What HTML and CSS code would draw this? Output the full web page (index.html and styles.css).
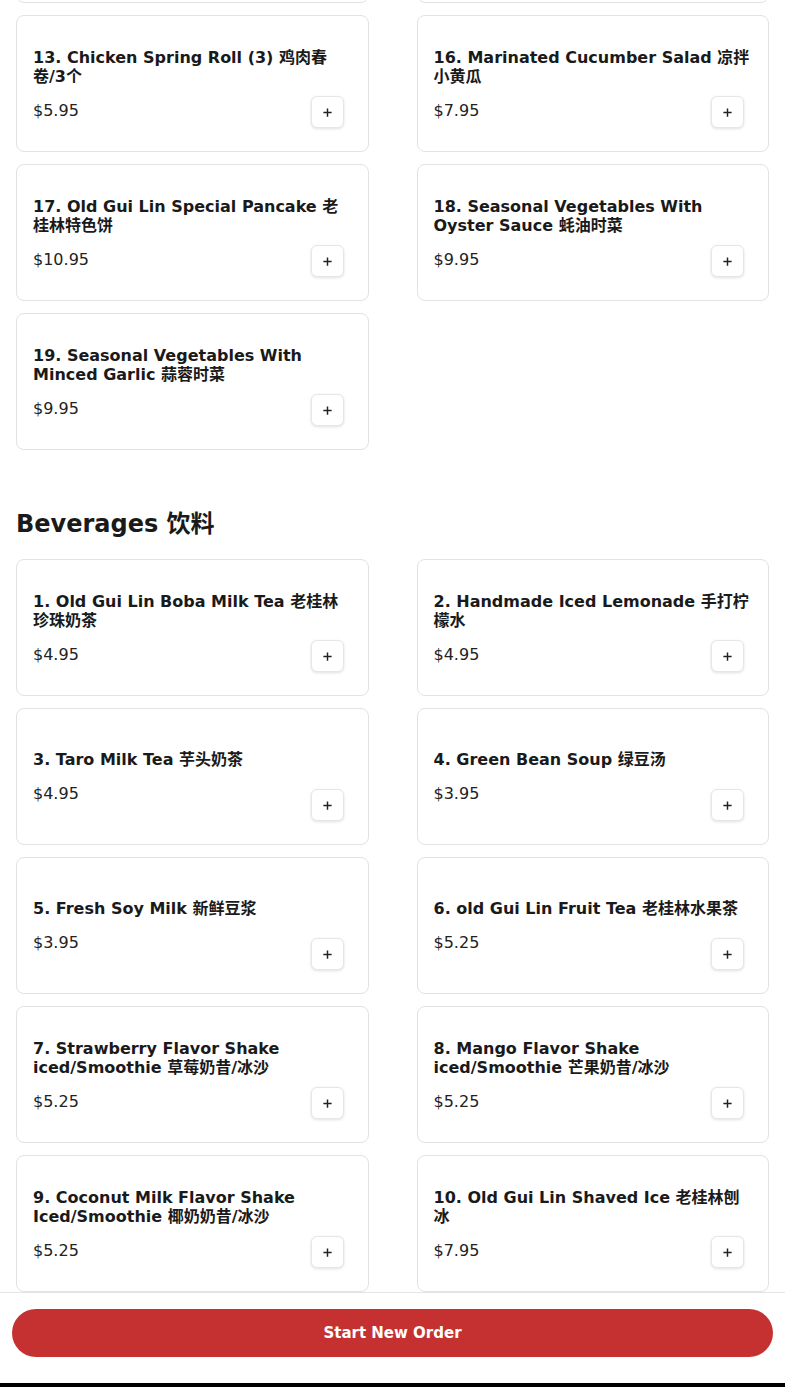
FILE: index.html
```html
<!DOCTYPE html>
<html lang="en">
<head>
    <meta charset="UTF-8">
    <meta name="viewport" content="width=device-width, initial-scale=1.0">
    <title>Old Gui Lin Menu</title>
    <link rel="stylesheet" href="styles.css">
</head>
<body>
    <main class="menu">
        <section class="category category-scrolled">
            <div class="item-grid">
                <div class="item-card">
                    <h3 class="item-name">12. Pork Dumplings (6) 猪肉饺子</h3>
                    <p class="item-price">$7.95</p>
                    <button class="add-button" aria-label="Add"><svg viewBox="0 0 12 12"><path d="M6 1.5v9M1.5 6h9"/></svg></button>
                </div>
                <div class="item-card">
                    <h3 class="item-name">15. Pickled Radish 腌萝卜</h3>
                    <p class="item-price">$5.95</p>
                    <button class="add-button" aria-label="Add"><svg viewBox="0 0 12 12"><path d="M6 1.5v9M1.5 6h9"/></svg></button>
                </div>
                <div class="item-card">
                    <h3 class="item-name">13. Chicken Spring Roll (3) 鸡肉春卷/3个</h3>
                    <p class="item-price">$5.95</p>
                    <button class="add-button" aria-label="Add"><svg viewBox="0 0 12 12"><path d="M6 1.5v9M1.5 6h9"/></svg></button>
                </div>
                <div class="item-card">
                    <h3 class="item-name">16. Marinated Cucumber Salad 凉拌小黄瓜</h3>
                    <p class="item-price">$7.95</p>
                    <button class="add-button" aria-label="Add"><svg viewBox="0 0 12 12"><path d="M6 1.5v9M1.5 6h9"/></svg></button>
                </div>
                <div class="item-card">
                    <h3 class="item-name">17. Old Gui Lin Special Pancake 老桂林特色饼</h3>
                    <p class="item-price">$10.95</p>
                    <button class="add-button" aria-label="Add"><svg viewBox="0 0 12 12"><path d="M6 1.5v9M1.5 6h9"/></svg></button>
                </div>
                <div class="item-card">
                    <h3 class="item-name">18. Seasonal Vegetables With Oyster Sauce 蚝油时菜</h3>
                    <p class="item-price">$9.95</p>
                    <button class="add-button" aria-label="Add"><svg viewBox="0 0 12 12"><path d="M6 1.5v9M1.5 6h9"/></svg></button>
                </div>
                <div class="item-card">
                    <h3 class="item-name">19. Seasonal Vegetables With Minced Garlic 蒜蓉时菜</h3>
                    <p class="item-price">$9.95</p>
                    <button class="add-button" aria-label="Add"><svg viewBox="0 0 12 12"><path d="M6 1.5v9M1.5 6h9"/></svg></button>
                </div>
            </div>
        </section>

        <section class="category">
            <h2 class="category-title">Beverages 饮料</h2>
            <div class="item-grid">
                <div class="item-card">
                    <h3 class="item-name">1. Old Gui Lin Boba Milk Tea 老桂林珍珠奶茶</h3>
                    <p class="item-price">$4.95</p>
                    <button class="add-button" aria-label="Add"><svg viewBox="0 0 12 12"><path d="M6 1.5v9M1.5 6h9"/></svg></button>
                </div>
                <div class="item-card">
                    <h3 class="item-name">2. Handmade Iced Lemonade 手打柠檬水</h3>
                    <p class="item-price">$4.95</p>
                    <button class="add-button" aria-label="Add"><svg viewBox="0 0 12 12"><path d="M6 1.5v9M1.5 6h9"/></svg></button>
                </div>
                <div class="item-card">
                    <h3 class="item-name">3. Taro Milk Tea 芋头奶茶</h3>
                    <p class="item-price">$4.95</p>
                    <button class="add-button" aria-label="Add"><svg viewBox="0 0 12 12"><path d="M6 1.5v9M1.5 6h9"/></svg></button>
                </div>
                <div class="item-card">
                    <h3 class="item-name">4. Green Bean Soup 绿豆汤</h3>
                    <p class="item-price">$3.95</p>
                    <button class="add-button" aria-label="Add"><svg viewBox="0 0 12 12"><path d="M6 1.5v9M1.5 6h9"/></svg></button>
                </div>
                <div class="item-card">
                    <h3 class="item-name">5. Fresh Soy Milk 新鲜豆浆</h3>
                    <p class="item-price">$3.95</p>
                    <button class="add-button" aria-label="Add"><svg viewBox="0 0 12 12"><path d="M6 1.5v9M1.5 6h9"/></svg></button>
                </div>
                <div class="item-card">
                    <h3 class="item-name">6. old Gui Lin Fruit Tea 老桂林水果茶</h3>
                    <p class="item-price">$5.25</p>
                    <button class="add-button" aria-label="Add"><svg viewBox="0 0 12 12"><path d="M6 1.5v9M1.5 6h9"/></svg></button>
                </div>
                <div class="item-card">
                    <h3 class="item-name">7. Strawberry Flavor Shake iced/Smoothie 草莓奶昔/冰沙</h3>
                    <p class="item-price">$5.25</p>
                    <button class="add-button" aria-label="Add"><svg viewBox="0 0 12 12"><path d="M6 1.5v9M1.5 6h9"/></svg></button>
                </div>
                <div class="item-card">
                    <h3 class="item-name">8. Mango Flavor Shake iced/Smoothie 芒果奶昔/冰沙</h3>
                    <p class="item-price">$5.25</p>
                    <button class="add-button" aria-label="Add"><svg viewBox="0 0 12 12"><path d="M6 1.5v9M1.5 6h9"/></svg></button>
                </div>
                <div class="item-card">
                    <h3 class="item-name">9. Coconut Milk Flavor Shake Iced/Smoothie 椰奶奶昔/冰沙</h3>
                    <p class="item-price">$5.25</p>
                    <button class="add-button" aria-label="Add"><svg viewBox="0 0 12 12"><path d="M6 1.5v9M1.5 6h9"/></svg></button>
                </div>
                <div class="item-card">
                    <h3 class="item-name">10. Old Gui Lin Shaved Ice 老桂林刨冰</h3>
                    <p class="item-price">$7.95</p>
                    <button class="add-button" aria-label="Add"><svg viewBox="0 0 12 12"><path d="M6 1.5v9M1.5 6h9"/></svg></button>
                </div>
            </div>
        </section>
    </main>

    <footer class="order-bar">
        <button class="order-button">Start New Order</button>
    </footer>
</body>
</html>
```

FILE: styles.css
```css
body {
    font-family: "DejaVu Sans", "Noto Sans CJK SC", sans-serif;
    margin: 0;
    background-color: #fff;
    color: #1a1a1a;
}
.menu {
    padding: 0 16px 120px;
}
.category-scrolled {
    margin-top: -134px;
}
.category-title {
    font-size: 24px;
    font-weight: bold;
    line-height: 29px;
    margin: 60px 0 20px;
}
.item-grid {
    display: grid;
    grid-template-columns: 1fr 1fr;
    column-gap: 48px;
    row-gap: 12px;
}
.item-card {
    position: relative;
    box-sizing: border-box;
    height: 137px;
    padding: 0 16px;
    display: flex;
    flex-direction: column;
    justify-content: center;
    border: 1px solid #e2e2e2;
    border-radius: 8px;
    background-color: #fff;
}
.item-name {
    font-size: 16px;
    font-weight: bold;
    line-height: 19px;
    margin: 0 0 15px;
}
.item-price {
    font-size: 16px;
    line-height: 19px;
    margin: 0;
    color: #222;
}
.add-button {
    position: absolute;
    right: 24px;
    bottom: 23px;
    width: 33px;
    height: 32px;
    padding: 0;
    display: flex;
    align-items: center;
    justify-content: center;
    background-color: #fff;
    border: 1px solid #e6e6e6;
    border-radius: 6px;
    box-shadow: 0 1px 3px rgba(0,0,0,0.12);
    cursor: pointer;
}
.add-button svg {
    width: 11px;
    height: 11px;
    stroke: #222;
    stroke-width: 1.6;
    fill: none;
}
.order-bar {
    position: fixed;
    left: 0;
    right: 0;
    bottom: 0;
    padding: 16px 12px 26px;
    background-color: #fff;
    border-top: 1px solid #e5e5e5;
    border-bottom: 4px solid #000;
}
.order-button {
    display: block;
    width: 100%;
    height: 48px;
    border: none;
    border-radius: 24px;
    background-color: #c53030;
    color: #fff;
    font-family: "DejaVu Sans", sans-serif;
    font-size: 15px;
    font-weight: bold;
    cursor: pointer;
}
```
